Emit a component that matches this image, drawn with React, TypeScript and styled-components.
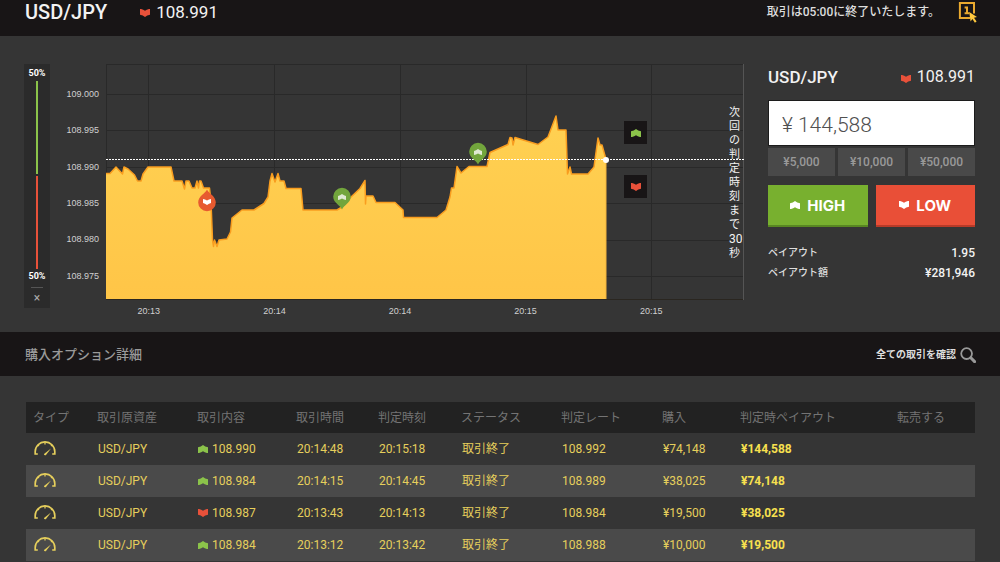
import React, { useState } from 'react';
import styled, { createGlobalStyle } from 'styled-components';

const color = {
  bar: '#181516',
  page: '#353535',
  green: '#8bc34a',
  red: '#e8513a',
  gold: '#e6cf5c',
  line: '#292929',
};

const GlobalStyle = createGlobalStyle`
  *, *::before, *::after { box-sizing: border-box; }
  body {
    margin: 0;
    background: ${color.page};
    color: #f2f2f2;
    font-family: Roboto, "Noto Sans CJK JP", sans-serif;
    font-size: 12px;
    line-height: 16px;
  }
  button, input { font-family: inherit; margin: 0; border: 0; border-radius: 0; }
  button { cursor: pointer; }
  h1, h2, h3, p, dl, dd { margin: 0; font-weight: 400; }
`;

/* ---------- icons ---------- */

type Direction = 'up' | 'down';

const ArrowSvg = styled.svg<{ $dir: Direction }>`
  display: block;
  flex: none;
  transform: ${(p) => (p.$dir === 'down' ? 'rotate(180deg)' : 'none')};
`;

function Arrow({ dir, fill }: { dir: Direction; fill?: string }) {
  return (
    <ArrowSvg $dir={dir} width="10" height="8" viewBox="0 0 10 8" aria-hidden="true">
      <path
        d="M0 2.2 Q3 1.8 5 0 Q7 1.8 10 2.2 V8.2 Q7 7.8 5 6.2 Q3 7.8 0 8.2 Z"
        fill={fill ?? (dir === 'up' ? color.green : color.red)}
      />
    </ArrowSvg>
  );
}

function Gauge() {
  return (
    <svg width="22" height="16" viewBox="0 0 22 16" fill="none" stroke={color.gold} aria-hidden="true">
      <path d="M3.8 13 H1.2 V10.6 A9.8 9.7 0 0 1 20.8 10.6 V13 H18.2" strokeWidth="1.7" />
      <path d="M11 1.2 V3.6 M4 4 L5 5 M18 4 L17 5" strokeWidth="1.3" />
      <path d="M10 13 L17 7.4 L11.8 14.2 Q9.8 14.6 10 13 Z" fill={color.gold} stroke="none" />
    </svg>
  );
}

function OneClickIcon() {
  return (
    <svg width="20" height="22" viewBox="0 0 20 22" aria-hidden="true">
      <path d="M12 17 H1.9 V1.9 H16 V12.4" fill="none" stroke="#e9a92f" strokeWidth="2" />
      <path d="M6.6 6.6 H9 V12.2 M6.6 12.2 H11.4" fill="none" stroke="#e9a92f" strokeWidth="2" />
      <path d="M11.2 11 L19 16 L16 16.8 L18.6 20.6 L16.9 21.8 L14.4 18 L12.6 20.4 Z" fill="#ffc83e" />
    </svg>
  );
}

function SearchIcon() {
  return (
    <svg width="16" height="16" viewBox="0 0 16 16" fill="none" stroke="#999" aria-hidden="true">
      <circle cx="6.6" cy="6.6" r="5.4" strokeWidth="1.8" />
      <path d="M10.8 10.8 L14.6 14.6" strokeWidth="3" strokeLinecap="round" />
    </svg>
  );
}

/* ---------- top bar ---------- */

const TopBar = styled.header`
  display: flex;
  align-items: center;
  height: 36px;
  padding: 0 22px 13px 25px;
  background: ${color.bar};
`;

const PairTitle = styled.h1`
  font-size: 20px;
  line-height: 24px;
  font-weight: 500;
  margin-right: 33px;
`;

const Quote = styled.span<{ $size: number }>`
  display: flex;
  align-items: center;
  gap: 6px;
  font-size: ${(p) => p.$size}px;
  line-height: 20px;
  svg { margin-top: 3px; }
`;

const Notice = styled.p`
  margin-left: auto;
  font-weight: 500;
  margin-right: 18px;
  color: #ddd;
`;

const PlainButton = styled.button`
  display: flex;
  align-items: center;
  gap: 4px;
  padding: 0;
  background: none;
  color: #ddd;
  font-size: 10px;
  line-height: 16px;
  font-weight: 700;
`;

/* ---------- trading area ---------- */

const Trading = styled.main`
  display: flex;
  align-items: flex-start;
  padding: 28px 25px 15px 24px;
`;

const Sentiment = styled.aside`
  flex: none;
  display: flex;
  flex-direction: column;
  align-items: center;
  width: 26px;
  height: 244px;
  padding-top: 3px;
  background: #2b2b2b;
  font-size: 9px;
  line-height: 12px;
  font-weight: 700;
  color: #fff;
`;

const SentimentBar = styled.div`
  display: flex;
  flex-direction: column;
  gap: 2px;
  width: 2px;
  height: 188px;
  margin: 2px 0 1px;
`;

const Share = styled.div<{ $tone: string }>`
  background: ${(p) => p.$tone};
`;

const CloseButton = styled.button`
  width: 12px;
  margin-top: 5px;
  padding: 3px 0 0;
  border-top: 1px solid #555;
  background: none;
  color: #aaa;
  font-size: 12px;
  line-height: 14px;
`;

const PriceAxis = styled.div`
  flex: none;
  display: flex;
  flex-direction: column;
  width: 56px;
  height: 236px;
  padding: 12px 7px 6px 0;
`;

const AxisLabel = styled.span<{ $align: 'center' | 'flex-end' }>`
  flex: 1;
  display: flex;
  align-items: center;
  justify-content: ${(p) => p.$align};
  font-family: "Liberation Sans", Arial, sans-serif;
  font-size: 9px;
  line-height: 12px;
  color: #d0d0d0;
`;

const ChartColumn = styled.section`
  flex: 1;
  min-width: 0;
`;

const Plot = styled.div`
  position: relative;
  height: 236px;
`;

const PlotSvg = styled.svg`
  display: block;
  width: 100%;
  height: 100%;
  path, line { vector-effect: non-scaling-stroke; }
`;

const TimeAxis = styled.div`
  display: flex;
  margin: 5px 30px 0 -20px;
`;

const Pin = styled.svg`
  position: absolute;
  overflow: visible;
`;

const SideButton = styled.button`
  position: absolute;
  left: 81.2%;
  display: flex;
  align-items: center;
  justify-content: center;
  width: 23px;
  height: 23px;
  padding: 0;
  background: ${color.bar};
`;

const Countdown = styled.p`
  position: absolute;
  right: 1px;
  top: 42px;
  width: 14px;
  font-size: 11px;
  line-height: 14px;
  word-break: normal;
  span { font-size: 12px; }
`;

const W = 638;
const H = 236;

const gridY = [30, 66, 103, 139, 176, 212];
const gridX = [42, 168, 294, 420, 545];

const prices: [number, number][] = [
  [0, 109.5], [4, 109.5], [10, 103], [16.5, 110], [18, 103], [22, 105], [28.5, 111], [31.5, 117], [35, 117],
  [37, 110], [42, 103], [65, 103], [68, 117], [76, 117], [78.5, 125], [80, 117], [83, 117], [86, 124],
  [89, 124], [91, 117], [92.5, 124], [93.5, 117], [95, 117], [97.5, 124], [103.5, 124], [105, 138],
  [106.5, 176], [107.5, 182.5], [108.5, 176], [111, 182.5], [113, 176], [121, 175], [124.5, 168],
  [126, 154], [136, 146], [148, 146], [158, 139.5], [162, 133], [164, 117], [166, 109.5], [169, 118],
  [172, 109.5], [174, 117], [178, 117], [180, 124.5], [195, 124.5], [197, 146], [231, 146], [236, 143],
  [244, 134], [254, 124.5], [259, 116.5], [259.5, 140], [260, 132], [267, 132], [270, 138.5], [289, 138.5],
  [297, 146], [297.5, 153.5], [331, 153.5], [340, 146], [344, 133], [345.5, 124], [348, 124], [351, 102.5],
  [355, 109], [363, 102.5], [381, 102.5], [384, 88.5], [402, 80.5], [404, 73.5], [406, 74], [407, 81],
  [409, 73.5], [432, 80.5], [442, 73], [450, 52], [452, 66], [460, 66], [461.5, 110], [464, 103],
  [465.5, 110], [482, 110], [488, 103], [492, 74], [494, 81], [496, 81], [500, 95.5],
];

const linePath = 'M' + prices.map(([x, y]) => `${x} ${y}`).join(' L');
const areaPath = `${linePath} V${H} H0 Z`;

const pins: { x: number; y: number; dir: Direction }[] = [
  { x: 101, y: 138, dir: 'down' },
  { x: 236, y: 133, dir: 'up' },
  { x: 372, y: 88, dir: 'up' },
];

function TradePin({ x, y, dir }: { x: number; y: number; dir: Direction }) {
  const up = dir === 'up';
  return (
    <Pin width="1" height="1" style={{ left: `${(x / W) * 100}%`, top: y }} aria-hidden="true">
      <path
        transform={up ? undefined : 'rotate(180)'}
        d="M0 12.5 C-1.6 8.4 -8.8 6 -8.8 -0.4 A8.8 8.8 0 0 1 8.8 -0.4 C8.8 6 1.6 8.4 0 12.5 Z"
        fill={up ? '#72a53c' : '#e75a30'}
      />
      <path
        transform={up ? 'translate(-4 -3)' : 'rotate(180) translate(-4 -3)'}
        d="M0 2 Q2 1.4 4 0 Q6 1.4 8 2 V6 Q6 5.8 4 4.4 Q2 5.8 0 6 Z"
        fill={up ? '#dfe9d2' : '#fff'}
      />
    </Pin>
  );
}

function Chart() {
  return (
    <>
      <PriceAxis>
        {['109.000', '108.995', '108.990', '108.985', '108.980', '108.975'].map((v) => (
          <AxisLabel key={v} $align="flex-end">{v}</AxisLabel>
        ))}
      </PriceAxis>
      <ChartColumn aria-label="USD/JPY">
        <Plot>
          <PlotSvg viewBox={`0 0 ${W} ${H}`} preserveAspectRatio="none">
            <defs>
              <linearGradient id="area" x1="0" y1="0" x2="0" y2="1">
                <stop offset="0" stopColor="#ffd152" />
                <stop offset="1" stopColor="#ffc547" />
              </linearGradient>
            </defs>
            <g stroke={color.line} strokeWidth="1">
              {gridY.map((y) => <line key={y} x1="0" x2={W} y1={y + 0.5} y2={y + 0.5} />)}
              {gridX.map((x) => <line key={x} x1={x + 0.5} x2={x + 0.5} y1="0" y2={H} />)}
              <line x1="0" x2={W} y1="0.5" y2="0.5" />
              <line x1="0.5" x2="0.5" y1="0" y2={H} />
            </g>
            <path d={areaPath} fill="url(#area)" />
            <path d={linePath} fill="none" stroke="#f99d1f" strokeWidth="1.5" strokeLinejoin="round" />
            <line x1="500" x2="500" y1="95" y2={H} stroke="#f3b33c" strokeWidth="1" />
            <line x1="0" x2={W} y1="235.5" y2="235.5" stroke="#2a2620" strokeWidth="1" />
            <line x1={W - 0.5} x2={W - 0.5} y1="0" y2={H} stroke="#555" strokeWidth="1" />
            <line x1="0" x2={W} y1="95.5" y2="95.5" stroke="#fff" strokeWidth="1" strokeDasharray="2 1" />
          </PlotSvg>
          {pins.map((p) => <TradePin key={p.x} {...p} />)}
          <Pin width="1" height="1" style={{ left: `${(500.5 / W) * 100}%`, top: 95.5 }} aria-hidden="true">
            <circle r="3" fill="#fff" />
          </Pin>
          <SideButton style={{ top: 57 }} aria-label="HIGH"><Arrow dir="up" /></SideButton>
          <SideButton style={{ top: 111 }} aria-label="LOW"><Arrow dir="down" /></SideButton>
          <Countdown>次回の判定時刻まで<span>30</span>秒</Countdown>
        </Plot>
        <TimeAxis>
          {['20:13', '20:14', '20:14', '20:15', '20:15'].map((t, i) => (
            <AxisLabel key={i} $align="center">{t}</AxisLabel>
          ))}
        </TimeAxis>
      </ChartColumn>
    </>
  );
}

/* ---------- order panel ---------- */

const Order = styled.form`
  flex: none;
  width: 207px;
  margin-left: 24px;
`;

const OrderHead = styled.div`
  display: flex;
  justify-content: space-between;
  align-items: center;
  height: 26px;
  margin-bottom: 10px;
`;

const OrderPair = styled.h2`
  font-size: 17px;
  line-height: 20px;
  font-weight: 500;
`;

const AmountInput = styled.input`
  display: block;
  width: 100%;
  height: 46px;
  padding: 4px 13px 0;
  border: 1px solid #1c1c1c;
  background: #fff;
  color: #505050;
  font-size: 21px;
  font-weight: 300;
  outline: none;
`;

const Presets = styled.div`
  display: grid;
  grid-template-columns: repeat(3, 1fr);
  gap: 3px;
  margin: 2px 0 9px;
`;

const Preset = styled.button`
  height: 28px;
  padding: 0;
  background: #494949;
  color: #999;
  font-size: 12px;
  font-weight: 500;
`;

const Sides = styled.div`
  display: grid;
  grid-template-columns: 1fr 1fr;
  gap: 8px;
  margin-bottom: 16px;
`;

const TradeButton = styled.button<{ $dir: Direction }>`
  display: flex;
  align-items: center;
  justify-content: center;
  gap: 7px;
  height: 42px;
  padding: 0;
  border-bottom: 2px solid ${(p) => (p.$dir === 'up' ? '#588722' : '#b83a28')};
  background: ${(p) => (p.$dir === 'up' ? '#78b02f' : '#e94f37')};
  color: #fff;
  font-family: Inter, sans-serif;
  font-size: 15px;
  font-weight: 700;
`;

const Payouts = styled.dl`
  display: grid;
  grid-template-columns: auto auto;
  justify-content: space-between;
  line-height: 20px;
  dt { font-size: 10px; font-weight: 500; color: #ddd; }
  dd { text-align: right; font-weight: 500; }
`;

function OrderPanel() {
  const [amount, setAmount] = useState('¥ 144,588');
  return (
    <Order onSubmit={(e) => e.preventDefault()}>
      <OrderHead>
        <OrderPair>USD/JPY</OrderPair>
        <Quote $size={16}><Arrow dir="down" />108.991</Quote>
      </OrderHead>
      <AmountInput aria-label="購入" value={amount} onChange={(e) => setAmount(e.target.value)} />
      <Presets>
        {['5,000', '10,000', '50,000'].map((v) => (
          <Preset key={v} type="button" onClick={() => setAmount(`¥ ${v}`)}>¥{v}</Preset>
        ))}
      </Presets>
      <Sides>
        <TradeButton type="button" $dir="up"><Arrow dir="up" fill="#fff" />HIGH</TradeButton>
        <TradeButton type="button" $dir="down"><Arrow dir="down" fill="#fff" />LOW</TradeButton>
      </Sides>
      <Payouts>
        <dt>ペイアウト</dt><dd>1.95</dd>
        <dt>ペイアウト額</dt><dd>¥281,946</dd>
      </Payouts>
    </Order>
  );
}

/* ---------- history ---------- */

const SectionBar = styled.div`
  display: flex;
  align-items: center;
  justify-content: space-between;
  height: 44px;
  padding: 2px 24px 0 25px;
  background: ${color.bar};
`;

const SectionTitle = styled.h2`
  font-size: 13px;
  line-height: 20px;
  font-weight: 500;
  color: #9a9a9a;
`;

const History = styled.section`
  padding: 26px 25px 0 26px;
`;

const Table = styled.table`
  width: 100%;
  table-layout: fixed;
  border-collapse: collapse;
  font-size: 12px;
  line-height: 16px;
  th, td { padding: 0 0 0 7px; text-align: left; white-space: nowrap; }
`;

const HeadRow = styled.tr`
  height: 31px;
  background: #222;
  color: #747474;
  th { font-weight: 400; }
`;

const Row = styled.tr`
  height: 32px;
  color: ${color.gold};
  &:nth-child(even) { background: #4a4a4a; }
  td { padding: 0 0 1px 8px; }
  svg { display: block; }
`;

const Rate = styled.span`
  display: flex;
  align-items: center;
  gap: 4px;
`;

const Payout = styled.td`
  font-weight: 700;
  color: #f7e04f;
`;

const columns: [string, number][] = [
  ['タイプ', 64], ['取引原資産', 100], ['取引内容', 99], ['取引時間', 82], ['判定時刻', 83],
  ['ステータス', 100], ['判定レート', 101], ['購入', 78], ['判定時ペイアウト', 157], ['転売する', 85],
];

const trades: { dir: Direction; rate: string; at: string; end: string; close: string; buy: string; pay: string }[] = [
  { dir: 'up', rate: '108.990', at: '20:14:48', end: '20:15:18', close: '108.992', buy: '¥74,148', pay: '¥144,588' },
  { dir: 'up', rate: '108.984', at: '20:14:15', end: '20:14:45', close: '108.989', buy: '¥38,025', pay: '¥74,148' },
  { dir: 'down', rate: '108.987', at: '20:13:43', end: '20:14:13', close: '108.984', buy: '¥19,500', pay: '¥38,025' },
  { dir: 'up', rate: '108.984', at: '20:13:12', end: '20:13:42', close: '108.988', buy: '¥10,000', pay: '¥19,500' },
];

export default function App() {
  return (
    <>
      <GlobalStyle />
      <TopBar>
        <PairTitle>USD/JPY</PairTitle>
        <Quote $size={17}><Arrow dir="down" />108.991</Quote>
        <Notice>取引は05:00に終了いたします。</Notice>
        <PlainButton type="button" aria-label="1"><OneClickIcon /></PlainButton>
      </TopBar>
      <Trading>
        <Sentiment>
          50%
          <SentimentBar>
            <Share $tone={color.green} style={{ flexGrow: 50 }} />
            <Share $tone={color.red} style={{ flexGrow: 50 }} />
          </SentimentBar>
          50%
          <CloseButton type="button">×</CloseButton>
        </Sentiment>
        <Chart />
        <OrderPanel />
      </Trading>
      <SectionBar>
        <SectionTitle>購入オプション詳細</SectionTitle>
        <PlainButton type="button">全ての取引を確認<SearchIcon /></PlainButton>
      </SectionBar>
      <History>
        <Table>
          <colgroup>
            {columns.map(([name, width]) => <col key={name} style={{ width: `${(width / 949) * 100}%` }} />)}
          </colgroup>
          <thead>
            <HeadRow>{columns.map(([name]) => <th key={name} scope="col">{name}</th>)}</HeadRow>
          </thead>
          <tbody>
            {trades.map((t) => (
              <Row key={t.at}>
                <td><Gauge /></td>
                <td>USD/JPY</td>
                <td><Rate><Arrow dir={t.dir} />{t.rate}</Rate></td>
                <td>{t.at}</td>
                <td>{t.end}</td>
                <td>取引終了</td>
                <td>{t.close}</td>
                <td>{t.buy}</td>
                <Payout>{t.pay}</Payout>
                <td />
              </Row>
            ))}
          </tbody>
        </Table>
      </History>
    </>
  );
}
